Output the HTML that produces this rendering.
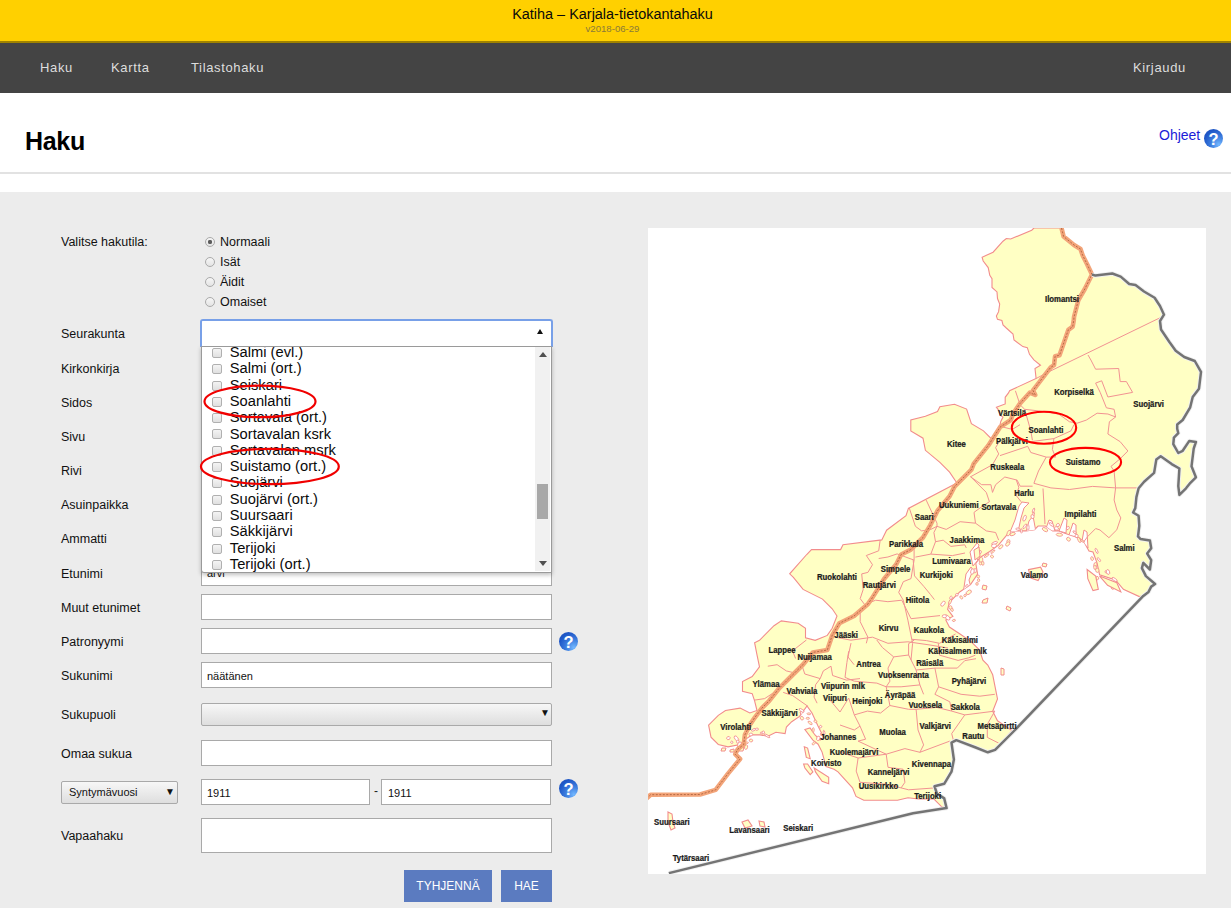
<!DOCTYPE html>
<html><head><meta charset="utf-8">
<style>
*{box-sizing:border-box}
html,body{margin:0;padding:0}
body{width:1231px;height:908px;overflow:hidden;position:relative;background:#ececec;font-family:"Liberation Sans",sans-serif;color:#222}
.a{position:absolute;white-space:nowrap}
#hdr{left:0;top:0;width:1231px;height:41px;background:#ffd000}
#hdrb{left:0;top:41px;width:1231px;height:2px;background:#a08300}
#nav{left:0;top:43px;width:1231px;height:50px;background:#444}
.nv{color:#dedede;font-size:13px;letter-spacing:0.65px;top:60px;line-height:16px}
#white{left:0;top:93px;width:1231px;height:99px;background:#fff}
#hline{left:0;top:172px;width:1231px;height:2px;background:#e2e2e2}
.lbl{font-size:12.5px;color:#111;line-height:16px;left:61px}
.inp{background:#fff;border:1px solid #a9a9a9;height:26px}
.it{font-size:14.7px;color:#0a0a0a;left:230px;line-height:16px}
.cb{left:212px;width:10px;height:10px;border:1px solid #b0b0b0;border-radius:2px;background:linear-gradient(#f4f4f4,#e0e0e0)}
.rd{left:205px;width:10px;height:10px;border:1px solid #aaa;border-radius:50%;background:linear-gradient(#f6f6f6,#e4e4e4)}
.btn{background:#5b7bc0;color:#fff;font-size:12px;text-align:center;line-height:32px;height:32px;top:870px}
.help{width:19px;height:19px;border-radius:50%;background:radial-gradient(circle at 78% 82%,#74b8ff 0%,#3f80e0 35%,#1f58c8 70%,#1a4fb8 100%);color:#fff;font-weight:bold;font-size:16.5px;line-height:20px;text-align:center}
</style></head><body>
<div id="hdr" class="a"></div>
<div id="hdrb" class="a"></div>
<div class="a" style="left:-3px;top:5.6px;width:1231px;text-align:center;font-size:14.45px;color:#0a0a0a;line-height:16px">Katiha – Karjala-tietokantahaku</div>
<div class="a" style="left:0;top:23px;width:1225px;text-align:center;font-size:9.6px;color:#8a7a3a;line-height:11px">v2018-06-29</div>
<div id="nav" class="a"></div>
<div class="a nv" style="left:40px">Haku</div>
<div class="a nv" style="left:111px">Kartta</div>
<div class="a nv" style="left:191px">Tilastohaku</div>
<div class="a nv" style="left:1133px">Kirjaudu</div>
<div id="white" class="a"></div>
<div id="hline" class="a"></div>
<div class="a" style="left:25px;top:127px;font-size:25px;letter-spacing:-0.3px;font-weight:bold;color:#000;line-height:28px">Haku</div>
<div class="a" style="left:1159px;top:127px;font-size:14px;color:#1c1cd8;line-height:16px">Ohjeet</div>
<div class="a help" style="left:1204px;top:129px">?</div>

<!-- form labels -->
<div class="a lbl" style="top:234.4px">Valitse hakutila:</div>
<div class="a rd" style="top:237px"></div><div class="a" style="left:208px;top:240px;width:4px;height:4px;border-radius:50%;background:#5a5a5a;box-shadow:0 0 0.6px #666"></div>
<div class="a rd" style="top:257px"></div>
<div class="a rd" style="top:277px"></div>
<div class="a rd" style="top:297px"></div>
<div class="a lbl" style="left:220px;top:234.4px">Normaali</div>
<div class="a lbl" style="left:220px;top:254.4px">Isät</div>
<div class="a lbl" style="left:220px;top:274.4px">Äidit</div>
<div class="a lbl" style="left:220px;top:294.4px">Omaiset</div>

<div class="a lbl" style="top:326px">Seurakunta</div>
<div class="a lbl" style="top:361px">Kirkonkirja</div>
<div class="a lbl" style="top:395px">Sidos</div>
<div class="a lbl" style="top:429px">Sivu</div>
<div class="a lbl" style="top:463px">Rivi</div>
<div class="a lbl" style="top:497px">Asuinpaikka</div>
<div class="a lbl" style="top:531px">Ammatti</div>
<div class="a lbl" style="top:566px">Etunimi</div>
<div class="a lbl" style="top:600px">Muut etunimet</div>
<div class="a lbl" style="top:634px">Patronyymi</div>
<div class="a lbl" style="top:668px">Sukunimi</div>
<div class="a lbl" style="top:707px">Sukupuoli</div>
<div class="a lbl" style="top:746px">Omaa sukua</div>
<div class="a lbl" style="top:828px">Vapaahaku</div>

<!-- inputs -->
<div class="a inp" style="left:201px;top:560px;width:351px"></div>
<div class="a" style="left:207px;top:565px;font-size:11px;color:#111;line-height:16px">ärvi</div>
<div class="a inp" style="left:201px;top:594px;width:351px"></div>
<div class="a inp" style="left:201px;top:628px;width:351px"></div>
<div class="a help" style="left:559px;top:632px">?</div>
<div class="a inp" style="left:201px;top:662px;width:351px"></div>
<div class="a" style="left:207px;top:668px;font-size:11px;color:#111;line-height:16px">näätänen</div>
<div class="a" style="left:201px;top:703px;width:351px;height:23px;border:1px solid #a9a9a9;border-radius:2px;background:linear-gradient(#f7f7f7,#dedede)"></div>
<div class="a" style="left:540px;top:706px;font-size:10px;color:#111;line-height:14px">▼</div>
<div class="a inp" style="left:201px;top:740px;width:351px"></div>
<div class="a" style="left:61px;top:781px;width:117px;height:23px;border:1px solid #a9a9a9;border-radius:2px;background:linear-gradient(#f7f7f7,#dedede)"></div>
<div class="a" style="left:69px;top:785px;font-size:11px;color:#111;line-height:14px">Syntymävuosi</div>
<div class="a" style="left:165px;top:785px;font-size:10px;color:#111;line-height:14px">▼</div>
<div class="a inp" style="left:201px;top:779px;width:169px"></div>
<div class="a" style="left:207px;top:785px;font-size:11px;color:#111;line-height:16px">1911</div>
<div class="a" style="left:374px;top:783px;font-size:12px;color:#222;line-height:16px">-</div>
<div class="a inp" style="left:381px;top:779px;width:170px"></div>
<div class="a" style="left:388px;top:785px;font-size:11px;color:#111;line-height:16px">1911</div>
<div class="a help" style="left:559px;top:779px">?</div>
<div class="a inp" style="left:201px;top:818px;width:351px;height:35px"></div>
<div class="a btn" style="left:404px;width:88px">TYHJENNÄ</div>
<div class="a btn" style="left:501px;width:51px">HAE</div>

<!-- seurakunta dropdown -->
<div id="dd" class="a" style="left:201px;top:346px;width:351px;height:227px;background:#fff;border:1px solid #9a9a9a;border-top:none;box-shadow:0 2px 4px rgba(0,0,0,.25);overflow:hidden;border-radius:0 0 0 3px">
<div class="a cb" style="left:10px;top:1.9px"></div><div class="a it" style="left:27.8px;top:-1.9px">Salmi (evl.)</div>
<div class="a cb" style="left:10px;top:18.2px"></div><div class="a it" style="left:27.8px;top:14.3px">Salmi (ort.)</div>
<div class="a cb" style="left:10px;top:34.5px"></div><div class="a it" style="left:27.8px;top:30.6px">Seiskari</div>
<div class="a cb" style="left:10px;top:50.8px"></div><div class="a it" style="left:27.8px;top:46.9px">Soanlahti</div>
<div class="a cb" style="left:10px;top:67.1px"></div><div class="a it" style="left:27.8px;top:63.2px">Sortavala (ort.)</div>
<div class="a cb" style="left:10px;top:83.4px"></div><div class="a it" style="left:27.8px;top:79.6px">Sortavalan ksrk</div>
<div class="a cb" style="left:10px;top:99.7px"></div><div class="a it" style="left:27.8px;top:95.8px">Sortavalan msrk</div>
<div class="a cb" style="left:10px;top:116.0px"></div><div class="a it" style="left:27.8px;top:112.1px">Suistamo (ort.)</div>
<div class="a cb" style="left:10px;top:132.3px"></div><div class="a it" style="left:27.8px;top:128.4px">Suojärvi</div>
<div class="a cb" style="left:10px;top:148.6px"></div><div class="a it" style="left:27.8px;top:144.8px">Suojärvi (ort.)</div>
<div class="a cb" style="left:10px;top:164.9px"></div><div class="a it" style="left:27.8px;top:161.1px">Suursaari</div>
<div class="a cb" style="left:10px;top:181.2px"></div><div class="a it" style="left:27.8px;top:177.4px">Säkkijärvi</div>
<div class="a cb" style="left:10px;top:197.5px"></div><div class="a it" style="left:27.8px;top:193.7px">Terijoki</div>
<div class="a cb" style="left:10px;top:213.8px"></div><div class="a it" style="left:27.8px;top:210.0px">Terijoki (ort.)</div>
</div>
<div class="a" style="left:535px;top:347px;width:15px;height:224px;background:#f1f1f1"></div>
<div class="a" style="left:537px;top:484px;width:11px;height:35px;background:#a8a8a8"></div>
<div class="a" style="left:539px;top:352px;width:0;height:0;border-left:4px solid transparent;border-right:4px solid transparent;border-bottom:5px solid #505050"></div>
<div class="a" style="left:539px;top:561px;width:0;height:0;border-left:4px solid transparent;border-right:4px solid transparent;border-top:5px solid #505050"></div>

<!-- select -->
<div class="a" style="left:200px;top:319px;width:353px;height:28px;background:#fff;border:2px solid #78a0e8;border-bottom:1px solid #9a9a9a;border-radius:3px 3px 0 0"></div>
<div class="a" style="left:537px;top:329px;width:0;height:0;border-left:3px solid transparent;border-right:3px solid transparent;border-bottom:5px solid #111"></div>
<svg class="a" style="left:190px;top:370px" width="170" height="130" viewBox="190 370 170 130"><g fill="none" stroke="#f00000" stroke-width="2.2"><ellipse cx="260" cy="401.4" rx="55.5" ry="15.8"/><ellipse cx="269.9" cy="466.5" rx="68.9" ry="17.7"/></g></svg>
<!-- map -->
<div class="a" style="left:648px;top:228px;width:558px;height:646px;background:#fff"></div>
<svg class="a" style="left:648px;top:228px" width="558" height="646" viewBox="648 228 558 646">
<polygon points="1034,228 1061.5,228 1063.6,236.5 1074,245 1080.5,249 1082.7,255.5 1087,264 1092,274.5 1095.4,275.6 1112.3,273.5 1120.7,276.6 1129.2,284 1135.5,285 1144,291.5 1154.6,297.8 1160,306 1164,314.7 1160,321 1161,329.5 1169.4,342 1175.7,350.7 1184.2,357 1194.8,361 1201,371.8 1199,388.7 1192.7,397 1190.2,407.3 1182.7,420 1177.2,424.4 1177.2,428.8 1178.3,433.2 1173.9,437.6 1173.3,444.2 1178.3,453 1182.7,450.8 1189.3,440.9 1195.9,442 1193.7,448.6 1191.5,466.3 1195.9,477.3 1190.4,482.8 1186,488.3 1179.4,494.9 1178.3,486.1 1179.4,468.5 1171.7,464.1 1160.7,456.3 1156.3,459.6 1154.1,472.9 1144.1,481.7 1138.6,488.3 1136.4,497.1 1135.3,508.1 1133.1,512.5 1138.6,515.8 1139.3,525.9 1138,536.4 1140.6,539.1 1149.9,540.4 1151.2,548.3 1147.2,553.6 1151.2,560.2 1149.9,569.5 1143.3,562.9 1141.9,568.1 1145.9,576.1 1155.1,584 1151.2,586.6 1148.5,591.9 1143.3,595.9 1139.3,596.6 1123.4,589.3 1115.5,580 1099.6,574.8 1097,562.9 1093,552 1089,551 1084,542 1079.3,538.1 1072.1,535.7 1064.8,533.3 1058.7,530.9 1052.7,530.9 1045.4,526 1038.1,526 1034.5,529.7 1026,530.9 1018.8,530.9 1010.3,530.9 1004.2,538.1 998.2,545.4 989.7,551.5 980,557.5 975.8,563.5 977.6,574.1 970.5,584.6 960,591.7 949.4,602.3 947.6,609.3 952.9,616.4 945.8,619.9 949.4,627 960,634 970.5,641.1 979.4,649.9 982.9,660.1 987.8,665.1 992.7,674.8 995.1,686.9 997.5,699 992.7,711.2 997.5,720.8 1012,730.5 995.1,749.9 987.8,752.3 975.7,747.5 956.3,740.2 951.5,742.7 953.9,759.6 951.5,771.7 944.2,783.8 934.5,786.3 936.9,793.5 944.2,798.4 946.6,808.1 941.7,806.8 934,799 918.3,799 908,797.7 897.5,800.3 863.8,800.3 856,796.4 852.5,787.8 838,771.9 834,769.3 826.1,766.6 822.1,752.1 818.1,744.2 812.9,740.2 804.9,729.6 810,728 815,735 820,740 824,738 818,726 812,713 807,706 799.6,716.4 791.7,721.7 786.4,727 785.1,733.6 775.9,732.3 767.9,736.3 760,734.9 752.2,734.8 745,739.6 740.1,744.5 728,746.9 718.3,744.5 711,737.2 708.6,725.1 718.3,715.4 725.5,710.5 740.1,708.1 749.8,713 757,710.5 754.6,700.8 752.2,693.6 742.5,691.2 742.5,681.5 752.2,676.6 759.5,666.9 757,654.8 754.6,642.7 759.5,640.3 774,625.7 781.3,620.9 798.2,623.3 805.5,628.2 805.5,637.8 815.2,640.3 827.3,635.4 832.2,628.2 837,616 832.2,608.8 822.5,599.1 803.1,589.4 793.4,577.3 789.7,573.8 806.7,554.5 811.5,549.6 840.6,549.6 843,544.7 881.8,539.9 886.6,530.2 906,515.7 908.4,508.4 956.9,483 949.6,472.1 939.9,462.4 925.4,450.3 923,438.2 910.8,430.9 910.8,420 925.4,416.3 937.5,411.5 939.9,406.7 954.5,404.2 966.6,409.1 971.4,423.6 983.5,430.9 990.8,438.2 998.1,433.3 1000.8,421.5 1003,417.1 999.7,414.9 999.7,411.6 996.4,407.2 1005.2,403.9 1005.2,397.3 1008.5,392.9 1009.6,390.7 1036.1,378.5 1035,368.6 1040.5,365.3 1033.9,359.8 1029.5,354.3 1027.3,347.7 1022.9,346.6 1014,340 1013,334 1006.3,328 1003,324.9 1001.9,320.5 997.5,319.4 996.4,316.1 998.6,311.7 999.7,304 997.5,298.5 997,291.9 992,287.5 992,278.7 989.8,275.4 988.2,267.6 983.2,261 982.1,257.2 993.1,252.2 1003,241.2 1006.3,238.5 1010.7,239 1031.7,230.2" fill="#ffffc4" stroke="#f28c8c" stroke-width="1.1"/>
<defs><clipPath id="land"><polygon points="1034,228 1061.5,228 1063.6,236.5 1074,245 1080.5,249 1082.7,255.5 1087,264 1092,274.5 1095.4,275.6 1112.3,273.5 1120.7,276.6 1129.2,284 1135.5,285 1144,291.5 1154.6,297.8 1160,306 1164,314.7 1160,321 1161,329.5 1169.4,342 1175.7,350.7 1184.2,357 1194.8,361 1201,371.8 1199,388.7 1192.7,397 1190.2,407.3 1182.7,420 1177.2,424.4 1177.2,428.8 1178.3,433.2 1173.9,437.6 1173.3,444.2 1178.3,453 1182.7,450.8 1189.3,440.9 1195.9,442 1193.7,448.6 1191.5,466.3 1195.9,477.3 1190.4,482.8 1186,488.3 1179.4,494.9 1178.3,486.1 1179.4,468.5 1171.7,464.1 1160.7,456.3 1156.3,459.6 1154.1,472.9 1144.1,481.7 1138.6,488.3 1136.4,497.1 1135.3,508.1 1133.1,512.5 1138.6,515.8 1139.3,525.9 1138,536.4 1140.6,539.1 1149.9,540.4 1151.2,548.3 1147.2,553.6 1151.2,560.2 1149.9,569.5 1143.3,562.9 1141.9,568.1 1145.9,576.1 1155.1,584 1151.2,586.6 1148.5,591.9 1143.3,595.9 1139.3,596.6 1123.4,589.3 1115.5,580 1099.6,574.8 1097,562.9 1093,552 1089,551 1084,542 1079.3,538.1 1072.1,535.7 1064.8,533.3 1058.7,530.9 1052.7,530.9 1045.4,526 1038.1,526 1034.5,529.7 1026,530.9 1018.8,530.9 1010.3,530.9 1004.2,538.1 998.2,545.4 989.7,551.5 980,557.5 975.8,563.5 977.6,574.1 970.5,584.6 960,591.7 949.4,602.3 947.6,609.3 952.9,616.4 945.8,619.9 949.4,627 960,634 970.5,641.1 979.4,649.9 982.9,660.1 987.8,665.1 992.7,674.8 995.1,686.9 997.5,699 992.7,711.2 997.5,720.8 1012,730.5 995.1,749.9 987.8,752.3 975.7,747.5 956.3,740.2 951.5,742.7 953.9,759.6 951.5,771.7 944.2,783.8 934.5,786.3 936.9,793.5 944.2,798.4 946.6,808.1 941.7,806.8 934,799 918.3,799 908,797.7 897.5,800.3 863.8,800.3 856,796.4 852.5,787.8 838,771.9 834,769.3 826.1,766.6 822.1,752.1 818.1,744.2 812.9,740.2 804.9,729.6 810,728 815,735 820,740 824,738 818,726 812,713 807,706 799.6,716.4 791.7,721.7 786.4,727 785.1,733.6 775.9,732.3 767.9,736.3 760,734.9 752.2,734.8 745,739.6 740.1,744.5 728,746.9 718.3,744.5 711,737.2 708.6,725.1 718.3,715.4 725.5,710.5 740.1,708.1 749.8,713 757,710.5 754.6,700.8 752.2,693.6 742.5,691.2 742.5,681.5 752.2,676.6 759.5,666.9 757,654.8 754.6,642.7 759.5,640.3 774,625.7 781.3,620.9 798.2,623.3 805.5,628.2 805.5,637.8 815.2,640.3 827.3,635.4 832.2,628.2 837,616 832.2,608.8 822.5,599.1 803.1,589.4 793.4,577.3 789.7,573.8 806.7,554.5 811.5,549.6 840.6,549.6 843,544.7 881.8,539.9 886.6,530.2 906,515.7 908.4,508.4 956.9,483 949.6,472.1 939.9,462.4 925.4,450.3 923,438.2 910.8,430.9 910.8,420 925.4,416.3 937.5,411.5 939.9,406.7 954.5,404.2 966.6,409.1 971.4,423.6 983.5,430.9 990.8,438.2 998.1,433.3 1000.8,421.5 1003,417.1 999.7,414.9 999.7,411.6 996.4,407.2 1005.2,403.9 1005.2,397.3 1008.5,392.9 1009.6,390.7 1036.1,378.5 1035,368.6 1040.5,365.3 1033.9,359.8 1029.5,354.3 1027.3,347.7 1022.9,346.6 1014,340 1013,334 1006.3,328 1003,324.9 1001.9,320.5 997.5,319.4 996.4,316.1 998.6,311.7 999.7,304 997.5,298.5 997,291.9 992,287.5 992,278.7 989.8,275.4 988.2,267.6 983.2,261 982.1,257.2 993.1,252.2 1003,241.2 1006.3,238.5 1010.7,239 1031.7,230.2"/></clipPath></defs>
<g clip-path="url(#land)">
<polygon points="1010,532 1015,520 1019,506 1022,502 1029,503 1024,508 1021,518 1018,532" fill="#ffffff" stroke="#f28c8c" stroke-width="1"/>
<polygon points="1026,532 1029,521 1033,516 1036,532" fill="#ffffff" stroke="#f28c8c" stroke-width="1"/>
<polygon points="1045,531 1049,520 1052,521 1055,531" fill="#ffffff" stroke="#f28c8c" stroke-width="1"/>
<polygon points="1059,531 1064,518 1067,520 1066,533" fill="#ffffff" stroke="#f28c8c" stroke-width="1"/>
<polygon points="1069,535 1073,523 1076,525 1076,537" fill="#ffffff" stroke="#f28c8c" stroke-width="1"/>
<polygon points="1082,541 1084,530 1087,532 1088,548" fill="#ffffff" stroke="#f28c8c" stroke-width="1"/>
<polygon points="970,552 977,543 979,545 975,556 978,560 973,566" fill="#ffffff" stroke="#f28c8c" stroke-width="1"/>
<polygon points="966,574 971,567 973,570 969,580 971,588 963,594" fill="#ffffff" stroke="#f28c8c" stroke-width="1"/>
<polygon points="952,605 958,598 962,604 955,612" fill="#ffffff" stroke="#f28c8c" stroke-width="1"/>
<polygon points="957,620 962,614 966,618 960,628" fill="#ffffff" stroke="#f28c8c" stroke-width="1"/>
<polygon points="800,712 808,708 811,716 804,722" fill="#ffffff" stroke="#f28c8c" stroke-width="1"/>
</g>
<ellipse cx="1033.5" cy="510.5" rx="2.5" ry="0.9" transform="rotate(110 1033.5 510.5)" fill="#ffffff" stroke="#f28c8c" stroke-width="0.8"/>
<ellipse cx="1033.6" cy="514.3" rx="2.2" ry="0.8" transform="rotate(101 1033.6 514.3)" fill="#ffffff" stroke="#f28c8c" stroke-width="0.8"/>
<ellipse cx="1032.5" cy="516.6" rx="2.0" ry="1.6" transform="rotate(77 1032.5 516.6)" fill="#ffffff" stroke="#f28c8c" stroke-width="0.8"/>
<ellipse cx="1024.6" cy="518.2" rx="3.1" ry="1.4" transform="rotate(111 1024.6 518.2)" fill="#ffffff" stroke="#f28c8c" stroke-width="0.8"/>
<ellipse cx="1028.0" cy="527.5" rx="2.9" ry="1.1" transform="rotate(91 1028.0 527.5)" fill="#ffffff" stroke="#f28c8c" stroke-width="0.8"/>
<ellipse cx="1024.8" cy="526.3" rx="2.8" ry="1.0" transform="rotate(126 1024.8 526.3)" fill="#ffffff" stroke="#f28c8c" stroke-width="0.8"/>
<ellipse cx="1021.3" cy="530.8" rx="2.3" ry="0.9" transform="rotate(84 1021.3 530.8)" fill="#ffffff" stroke="#f28c8c" stroke-width="0.8"/>
<ellipse cx="1017.9" cy="529.1" rx="2.1" ry="1.1" transform="rotate(187 1017.9 529.1)" fill="#ffffff" stroke="#f28c8c" stroke-width="0.8"/>
<ellipse cx="1012.6" cy="534.0" rx="2.8" ry="1.5" transform="rotate(160 1012.6 534.0)" fill="#ffffc4" stroke="#f28c8c" stroke-width="0.8"/>
<ellipse cx="1008.7" cy="533.1" rx="3.0" ry="1.5" transform="rotate(113 1008.7 533.1)" fill="#ffffc4" stroke="#f28c8c" stroke-width="0.8"/>
<ellipse cx="1008.4" cy="541.6" rx="2.0" ry="1.6" transform="rotate(102 1008.4 541.6)" fill="#ffffc4" stroke="#f28c8c" stroke-width="0.8"/>
<ellipse cx="1007.7" cy="544.0" rx="2.5" ry="1.6" transform="rotate(135 1007.7 544.0)" fill="#ffffc4" stroke="#f28c8c" stroke-width="0.8"/>
<ellipse cx="1000.8" cy="546.8" rx="2.6" ry="1.4" transform="rotate(136 1000.8 546.8)" fill="#ffffc4" stroke="#f28c8c" stroke-width="0.8"/>
<ellipse cx="994.6" cy="543.1" rx="3.1" ry="1.3" transform="rotate(157 994.6 543.1)" fill="#ffffff" stroke="#f28c8c" stroke-width="0.8"/>
<ellipse cx="994.0" cy="545.8" rx="2.5" ry="1.8" transform="rotate(170 994.0 545.8)" fill="#ffffff" stroke="#f28c8c" stroke-width="0.8"/>
<ellipse cx="992.9" cy="551.7" rx="2.5" ry="0.8" transform="rotate(141 992.9 551.7)" fill="#ffffc4" stroke="#f28c8c" stroke-width="0.8"/>
<ellipse cx="992.0" cy="556.5" rx="1.3" ry="1.6" transform="rotate(119 992.0 556.5)" fill="#ffffc4" stroke="#f28c8c" stroke-width="0.8"/>
<ellipse cx="986.7" cy="555.6" rx="2.9" ry="0.9" transform="rotate(144 986.7 555.6)" fill="#ffffc4" stroke="#f28c8c" stroke-width="0.8"/>
<ellipse cx="979.1" cy="552.8" rx="2.8" ry="1.7" transform="rotate(131 979.1 552.8)" fill="#ffffff" stroke="#f28c8c" stroke-width="0.8"/>
<ellipse cx="981.0" cy="560.1" rx="3.0" ry="1.8" transform="rotate(97 981.0 560.1)" fill="#ffffc4" stroke="#f28c8c" stroke-width="0.8"/>
<ellipse cx="980.8" cy="563.3" rx="1.7" ry="1.3" transform="rotate(132 980.8 563.3)" fill="#ffffc4" stroke="#f28c8c" stroke-width="0.8"/>
<ellipse cx="982.8" cy="563.3" rx="2.0" ry="1.2" transform="rotate(86 982.8 563.3)" fill="#ffffc4" stroke="#f28c8c" stroke-width="0.8"/>
<ellipse cx="975.0" cy="570.7" rx="2.2" ry="1.4" transform="rotate(94 975.0 570.7)" fill="#ffffff" stroke="#f28c8c" stroke-width="0.8"/>
<ellipse cx="972.4" cy="571.5" rx="2.8" ry="1.7" transform="rotate(104 972.4 571.5)" fill="#ffffff" stroke="#f28c8c" stroke-width="0.8"/>
<ellipse cx="978.2" cy="576.5" rx="1.4" ry="1.4" transform="rotate(89 978.2 576.5)" fill="#ffffc4" stroke="#f28c8c" stroke-width="0.8"/>
<ellipse cx="978.6" cy="580.2" rx="1.5" ry="1.1" transform="rotate(88 978.6 580.2)" fill="#ffffc4" stroke="#f28c8c" stroke-width="0.8"/>
<ellipse cx="977.0" cy="583.9" rx="1.4" ry="1.2" transform="rotate(86 977.0 583.9)" fill="#ffffc4" stroke="#f28c8c" stroke-width="0.8"/>
<ellipse cx="966.9" cy="585.9" rx="1.5" ry="1.1" transform="rotate(134 966.9 585.9)" fill="#ffffff" stroke="#f28c8c" stroke-width="0.8"/>
<ellipse cx="968.8" cy="592.3" rx="2.9" ry="1.8" transform="rotate(143 968.8 592.3)" fill="#ffffc4" stroke="#f28c8c" stroke-width="0.8"/>
<ellipse cx="965.1" cy="595.4" rx="1.4" ry="1.1" transform="rotate(127 965.1 595.4)" fill="#ffffc4" stroke="#f28c8c" stroke-width="0.8"/>
<ellipse cx="961.3" cy="597.4" rx="1.2" ry="1.8" transform="rotate(137 961.3 597.4)" fill="#ffffc4" stroke="#f28c8c" stroke-width="0.8"/>
<ellipse cx="956.9" cy="594.7" rx="1.3" ry="1.3" transform="rotate(173 956.9 594.7)" fill="#ffffff" stroke="#f28c8c" stroke-width="0.8"/>
<ellipse cx="951.0" cy="597.8" rx="1.7" ry="1.2" transform="rotate(108 951.0 597.8)" fill="#ffffff" stroke="#f28c8c" stroke-width="0.8"/>
<ellipse cx="950.1" cy="601.7" rx="2.8" ry="1.1" transform="rotate(113 950.1 601.7)" fill="#ffffc4" stroke="#f28c8c" stroke-width="0.8"/>
<ellipse cx="943.0" cy="603.7" rx="2.9" ry="1.6" transform="rotate(130 943.0 603.7)" fill="#ffffff" stroke="#f28c8c" stroke-width="0.8"/>
<ellipse cx="951.8" cy="609.4" rx="2.2" ry="1.2" transform="rotate(67 951.8 609.4)" fill="#ffffc4" stroke="#f28c8c" stroke-width="0.8"/>
<ellipse cx="950.4" cy="607.4" rx="1.7" ry="1.5" transform="rotate(90 950.4 607.4)" fill="#ffffc4" stroke="#f28c8c" stroke-width="0.8"/>
<ellipse cx="947.3" cy="617.5" rx="3.2" ry="1.8" transform="rotate(42 947.3 617.5)" fill="#ffffff" stroke="#f28c8c" stroke-width="0.8"/>
<ellipse cx="953.9" cy="620.4" rx="1.6" ry="1.0" transform="rotate(164 953.9 620.4)" fill="#ffffc4" stroke="#f28c8c" stroke-width="0.8"/>
<ellipse cx="944.4" cy="616.2" rx="2.2" ry="1.5" transform="rotate(178 944.4 616.2)" fill="#ffffff" stroke="#f28c8c" stroke-width="0.8"/>
<ellipse cx="1045.0" cy="529.6" rx="3.0" ry="1.6" transform="rotate(31 1045.0 529.6)" fill="#ffffc4" stroke="#f28c8c" stroke-width="0.8"/>
<ellipse cx="1051.5" cy="524.5" rx="2.8" ry="1.1" transform="rotate(35 1051.5 524.5)" fill="#ffffff" stroke="#f28c8c" stroke-width="0.8"/>
<ellipse cx="1056.5" cy="528.4" rx="2.0" ry="1.7" transform="rotate(29 1056.5 528.4)" fill="#ffffff" stroke="#f28c8c" stroke-width="0.8"/>
<ellipse cx="1057.9" cy="525.1" rx="1.5" ry="1.7" transform="rotate(36 1057.9 525.1)" fill="#ffffff" stroke="#f28c8c" stroke-width="0.8"/>
<ellipse cx="1059.4" cy="534.7" rx="3.2" ry="1.5" transform="rotate(6 1059.4 534.7)" fill="#ffffc4" stroke="#f28c8c" stroke-width="0.8"/>
<ellipse cx="1067.9" cy="528.0" rx="1.2" ry="1.8" transform="rotate(30 1067.9 528.0)" fill="#ffffff" stroke="#f28c8c" stroke-width="0.8"/>
<ellipse cx="1068.5" cy="539.2" rx="2.1" ry="1.7" transform="rotate(45 1068.5 539.2)" fill="#ffffc4" stroke="#f28c8c" stroke-width="0.8"/>
<ellipse cx="1074.5" cy="532.2" rx="1.8" ry="1.0" transform="rotate(37 1074.5 532.2)" fill="#ffffff" stroke="#f28c8c" stroke-width="0.8"/>
<ellipse cx="1076.6" cy="535.9" rx="1.5" ry="1.7" transform="rotate(19 1076.6 535.9)" fill="#ffffff" stroke="#f28c8c" stroke-width="0.8"/>
<ellipse cx="1079.1" cy="539.8" rx="3.0" ry="1.2" transform="rotate(64 1079.1 539.8)" fill="#ffffc4" stroke="#f28c8c" stroke-width="0.8"/>
<ellipse cx="1082.5" cy="541.1" rx="2.2" ry="0.8" transform="rotate(25 1082.5 541.1)" fill="#ffffc4" stroke="#f28c8c" stroke-width="0.8"/>
<ellipse cx="1096.6" cy="550.9" rx="2.8" ry="1.0" transform="rotate(65 1096.6 550.9)" fill="#ffffff" stroke="#f28c8c" stroke-width="0.8"/>
<ellipse cx="1092.1" cy="558.6" rx="1.9" ry="1.3" transform="rotate(72 1092.1 558.6)" fill="#ffffc4" stroke="#f28c8c" stroke-width="0.8"/>
<ellipse cx="1098.9" cy="559.6" rx="2.3" ry="1.0" transform="rotate(49 1098.9 559.6)" fill="#ffffff" stroke="#f28c8c" stroke-width="0.8"/>
<ellipse cx="1095.4" cy="564.8" rx="2.3" ry="1.6" transform="rotate(100 1095.4 564.8)" fill="#ffffc4" stroke="#f28c8c" stroke-width="0.8"/>
<ellipse cx="1095.0" cy="567.4" rx="2.2" ry="1.3" transform="rotate(83 1095.0 567.4)" fill="#ffffc4" stroke="#f28c8c" stroke-width="0.8"/>
<ellipse cx="1097.3" cy="570.2" rx="2.2" ry="1.7" transform="rotate(83 1097.3 570.2)" fill="#ffffc4" stroke="#f28c8c" stroke-width="0.8"/>
<ellipse cx="1097.3" cy="578.1" rx="1.7" ry="1.4" transform="rotate(73 1097.3 578.1)" fill="#ffffc4" stroke="#f28c8c" stroke-width="0.8"/>
<ellipse cx="1106.4" cy="571.8" rx="1.4" ry="1.2" transform="rotate(3 1106.4 571.8)" fill="#ffffff" stroke="#f28c8c" stroke-width="0.8"/>
<ellipse cx="1108.0" cy="572.0" rx="2.5" ry="1.6" transform="rotate(69 1108.0 572.0)" fill="#ffffff" stroke="#f28c8c" stroke-width="0.8"/>
<ellipse cx="1105.5" cy="580.7" rx="2.5" ry="0.9" transform="rotate(68 1105.5 580.7)" fill="#ffffc4" stroke="#f28c8c" stroke-width="0.8"/>
<ellipse cx="1114.6" cy="579.5" rx="3.1" ry="1.2" transform="rotate(36 1114.6 579.5)" fill="#ffffff" stroke="#f28c8c" stroke-width="0.8"/>
<ellipse cx="1112.6" cy="588.0" rx="1.5" ry="1.2" transform="rotate(39 1112.6 588.0)" fill="#ffffc4" stroke="#f28c8c" stroke-width="0.8"/>
<ellipse cx="728.4" cy="738.1" rx="1.8" ry="1.5" transform="rotate(-22 728.4 738.1)" fill="#ffffff" stroke="#f28c8c" stroke-width="0.8"/>
<ellipse cx="731.8" cy="742.3" rx="1.2" ry="1.1" transform="rotate(26 731.8 742.3)" fill="#ffffff" stroke="#f28c8c" stroke-width="0.8"/>
<ellipse cx="736.5" cy="738.6" rx="3.2" ry="1.6" transform="rotate(54 736.5 738.6)" fill="#ffffff" stroke="#f28c8c" stroke-width="0.8"/>
<ellipse cx="737.8" cy="741.7" rx="1.3" ry="1.6" transform="rotate(-2 737.8 741.7)" fill="#ffffff" stroke="#f28c8c" stroke-width="0.8"/>
<ellipse cx="739.3" cy="744.6" rx="3.0" ry="1.6" transform="rotate(-62 739.3 744.6)" fill="#ffffff" stroke="#f28c8c" stroke-width="0.8"/>
<ellipse cx="746.1" cy="747.1" rx="2.3" ry="1.5" transform="rotate(-75 746.1 747.1)" fill="#ffffc4" stroke="#f28c8c" stroke-width="0.8"/>
<ellipse cx="746.3" cy="742.9" rx="2.1" ry="0.9" transform="rotate(-7 746.3 742.9)" fill="#ffffc4" stroke="#f28c8c" stroke-width="0.8"/>
<ellipse cx="751.0" cy="740.5" rx="1.4" ry="1.7" transform="rotate(-77 751.0 740.5)" fill="#ffffc4" stroke="#f28c8c" stroke-width="0.8"/>
<ellipse cx="750.9" cy="734.5" rx="1.9" ry="1.4" transform="rotate(-8 750.9 734.5)" fill="#ffffff" stroke="#f28c8c" stroke-width="0.8"/>
<ellipse cx="753.6" cy="729.8" rx="2.3" ry="1.0" transform="rotate(-25 753.6 729.8)" fill="#ffffff" stroke="#f28c8c" stroke-width="0.8"/>
<ellipse cx="756.9" cy="729.2" rx="1.6" ry="1.1" transform="rotate(-9 756.9 729.2)" fill="#ffffff" stroke="#f28c8c" stroke-width="0.8"/>
<ellipse cx="762.3" cy="732.9" rx="2.2" ry="1.0" transform="rotate(-6 762.3 732.9)" fill="#ffffff" stroke="#f28c8c" stroke-width="0.8"/>
<ellipse cx="763.3" cy="732.5" rx="1.2" ry="1.5" transform="rotate(10 763.3 732.5)" fill="#ffffff" stroke="#f28c8c" stroke-width="0.8"/>
<ellipse cx="767.2" cy="735.9" rx="3.1" ry="0.9" transform="rotate(32 767.2 735.9)" fill="#ffffff" stroke="#f28c8c" stroke-width="0.8"/>
<ellipse cx="801.6" cy="710.4" rx="2.9" ry="1.2" transform="rotate(34 801.6 710.4)" fill="#ffffff" stroke="#f28c8c" stroke-width="0.8"/>
<ellipse cx="801.9" cy="718.2" rx="1.9" ry="1.6" transform="rotate(50 801.9 718.2)" fill="#ffffc4" stroke="#f28c8c" stroke-width="0.8"/>
<ellipse cx="808.9" cy="713.8" rx="1.9" ry="0.9" transform="rotate(4 808.9 713.8)" fill="#ffffc4" stroke="#f28c8c" stroke-width="0.8"/>
<ellipse cx="807.8" cy="718.3" rx="1.7" ry="1.0" transform="rotate(0 807.8 718.3)" fill="#ffffc4" stroke="#f28c8c" stroke-width="0.8"/>
<ellipse cx="810.1" cy="722.9" rx="2.5" ry="1.1" transform="rotate(36 810.1 722.9)" fill="#ffffc4" stroke="#f28c8c" stroke-width="0.8"/>
<ellipse cx="815.4" cy="721.3" rx="1.5" ry="1.2" transform="rotate(37 815.4 721.3)" fill="#ffffc4" stroke="#f28c8c" stroke-width="0.8"/>
<ellipse cx="813.2" cy="730.0" rx="2.3" ry="1.0" transform="rotate(94 813.2 730.0)" fill="#ffffc4" stroke="#f28c8c" stroke-width="0.8"/>
<ellipse cx="820.6" cy="726.6" rx="1.2" ry="1.2" transform="rotate(54 820.6 726.6)" fill="#ffffff" stroke="#f28c8c" stroke-width="0.8"/>
<ellipse cx="824.1" cy="732.5" rx="2.2" ry="0.8" transform="rotate(79 824.1 732.5)" fill="#ffffff" stroke="#f28c8c" stroke-width="0.8"/>
<ellipse cx="821.2" cy="734.3" rx="1.3" ry="0.8" transform="rotate(82 821.2 734.3)" fill="#ffffc4" stroke="#f28c8c" stroke-width="0.8"/>
<ellipse cx="818.3" cy="738.3" rx="2.3" ry="1.6" transform="rotate(110 818.3 738.3)" fill="#ffffff" stroke="#f28c8c" stroke-width="0.8"/>
<ellipse cx="813.8" cy="743.3" rx="2.0" ry="1.1" transform="rotate(136 813.8 743.3)" fill="#ffffc4" stroke="#f28c8c" stroke-width="0.8"/>
<polygon points="974,550 979,547 980,556 975,560" fill="#ffffc4" stroke="#f28c8c" stroke-width="1"/>
<polygon points="983,585 987,586 986,590 982,589" fill="#ffffc4" stroke="#f28c8c" stroke-width="1"/>
<polygon points="983,600 988,598 987,603 982,603" fill="#ffffc4" stroke="#f28c8c" stroke-width="1"/>
<polygon points="1007,606 1011,608 1010,611 1006,609" fill="#ffffc4" stroke="#f28c8c" stroke-width="1"/>
<polygon points="1043,563 1047,564 1046,567 1042,566" fill="#ffffc4" stroke="#f28c8c" stroke-width="1"/>
<polygon points="1001,668 1004,669 1004,675 1001,675" fill="#ffffc4" stroke="#f28c8c" stroke-width="1"/>
<polygon points="722,748 726,748 725,751 721,751" fill="#ffffc4" stroke="#f28c8c" stroke-width="1"/>
<polygon points="730,750 734,749 734,752 730,752" fill="#ffffc4" stroke="#f28c8c" stroke-width="1"/>
<polygon points="740,748 744,747 743,751 739,751" fill="#ffffc4" stroke="#f28c8c" stroke-width="1"/>
<polygon points="1028.5,569.6 1040.6,567.2 1043,572.1 1038.1,580.5 1030.9,578.1" fill="#ffffc4" stroke="#f28c8c" stroke-width="1.1"/>
<polygon points="1087.1,569.5 1095.7,576.1 1098.3,589.3 1093,590.6 1087.8,578.7" fill="#ffffc4" stroke="#f28c8c" stroke-width="1.1"/>
<polygon points="1099.6,576.1 1116.8,582.7 1120.8,591.9 1107.6,585.3" fill="#ffffc4" stroke="#f28c8c" stroke-width="1.1"/>
<polygon points="803.6,764 807.6,764 812.9,771.9 810.2,774.6 804.9,768" fill="#ffffc4" stroke="#f28c8c" stroke-width="1.1"/>
<polygon points="814.2,768 828.7,777.2 828.7,783.8 822.1,781.2 815.5,771.9" fill="#ffffc4" stroke="#f28c8c" stroke-width="1.1"/>
<polygon points="804.3,746.8 807.6,748.1 810.2,758.7 806.3,757.4" fill="#ffffc4" stroke="#f28c8c" stroke-width="1.1"/>
<polygon points="668,812 672,814 673,822 675,828 671,830 668,822" fill="#ffffc4" stroke="#f28c8c" stroke-width="1.1"/>
<polygon points="742,822 748,820 752,826 745,828" fill="#ffffc4" stroke="#f28c8c" stroke-width="1.1"/>
<polygon points="759,821 764,822 765,827 760,826" fill="#ffffc4" stroke="#f28c8c" stroke-width="1.1"/>
<polyline points="1162,316.8 1048.8,371.8 1036.1,378.5" fill="none" stroke="#f29292" stroke-width="1"/>
<polyline points="1088,355 1090.9,360 1095.6,369.2 1118.7,368.5 1120.2,381.6 1126.4,381.6 1132.6,392.4 1107.9,397 1101.7,380.8 1095.6,383.1 1100.2,392.4 1106.4,407.8 1114.1,409.3 1115.6,417 1109.4,421.7 1107.9,434 1120.2,441.7 1127.9,451 1120.2,458.7 1111,466.4 1114.1,471 1115.6,487.9 1114.1,500 1116.8,510 1120.8,517.9 1116.8,529.8 1108.9,537.7 1100,530 1095.7,528.5 1087.8,536.4 1083.8,541.7" fill="none" stroke="#f29292" stroke-width="1"/>
<polyline points="1024.7,409.3 1038.5,410.9 1058.6,414 1069.4,421.7 1077.1,423.2 1086.3,420.1 1097.1,413.2 1107.9,414 1115.6,417" fill="none" stroke="#f29292" stroke-width="1"/>
<polyline points="1015.4,390.8 1020,404.7 1024.7,409.3 1030.8,430.9 1032.4,440.2" fill="none" stroke="#f29292" stroke-width="1"/>
<polyline points="1000,426.3 1012.3,429.4 1020,424.7" fill="none" stroke="#f29292" stroke-width="1"/>
<polyline points="1030.8,441.7 1053.9,438.6 1070.9,430.9 1074,424.7" fill="none" stroke="#f29292" stroke-width="1"/>
<polyline points="1053.9,438.6 1052.4,449.4 1055.5,457.1" fill="none" stroke="#f29292" stroke-width="1"/>
<polyline points="1000,455.6 1027.7,446.3 1030.8,452.5 1046.2,457.1 1055.5,457.1" fill="none" stroke="#f29292" stroke-width="1"/>
<polyline points="1046.2,457.1 1038.5,471 1033.9,483.3" fill="none" stroke="#f29292" stroke-width="1"/>
<polyline points="1043,488.5 1044.2,509 1045,524" fill="none" stroke="#f29292" stroke-width="1"/>
<polyline points="1016.3,480 1018.8,487.3 1016.3,495.7 1021.2,501.8" fill="none" stroke="#f29292" stroke-width="1"/>
<polyline points="1033.9,483.3 1050.9,487.9 1069.4,489.5 1092.5,486.4 1115.6,487.9 1138.7,487.9" fill="none" stroke="#f29292" stroke-width="1"/>
<polyline points="970.1,477 992.5,464.7 998.7,453.9 995.6,447.7 1000.2,440" fill="none" stroke="#f29292" stroke-width="1"/>
<polyline points="970.9,477 981.7,484.7 990.9,484.7 992.5,492.4 995.6,484.7 1004.8,477 1017.1,480.1 1020.2,486.2 1032.6,486.2" fill="none" stroke="#f29292" stroke-width="1"/>
<polyline points="970.9,477 986.3,492.4 989.4,501.7 980.2,507.8 974,512.4 975.5,523.2 986.3,530.9 995.6,532.5 998.7,540.2" fill="none" stroke="#f29292" stroke-width="1"/>
<polyline points="937,526.3 946.2,529.4 960.1,521.7 975.5,523.2" fill="none" stroke="#f29292" stroke-width="1"/>
<polyline points="926.2,500.1 937,523.2 937,526.3 933.9,532.5 935.5,541.7 930.8,554.1" fill="none" stroke="#f29292" stroke-width="1"/>
<polyline points="909.2,507.8 915.4,526.3 921.6,530.9 930.8,529.4 937,526.3" fill="none" stroke="#f29292" stroke-width="1"/>
<polyline points="935.5,541.7 943.2,540.2 950.9,546.4 964.7,544.8 966.3,547.9" fill="none" stroke="#f29292" stroke-width="1"/>
<polyline points="915.4,557.1 930.8,554.1 952.4,555.6 965,553" fill="none" stroke="#f29292" stroke-width="1"/>
<polyline points="880.2,540 878.7,550.8 866.3,555.5 872.5,564.7 867.9,572.4 861.7,573.9 863.2,589.4 860.2,598.6 864.8,604.8" fill="none" stroke="#f29292" stroke-width="1"/>
<polyline points="878.7,558.5 887.9,557 897.1,553.9 914.1,560.1" fill="none" stroke="#f29292" stroke-width="1"/>
<polyline points="914.1,545 914.1,560.1 911,578.6 903.3,581.7 898.7,592.4 903.3,600.2" fill="none" stroke="#f29292" stroke-width="1"/>
<polyline points="864.8,604.8 875.6,600.2 887.9,601.7 901.8,600.2 911,618.7 940,615.6" fill="none" stroke="#f29292" stroke-width="1"/>
<polyline points="860.2,612.5 860.2,621.7 867.9,637.2 866.3,643.3" fill="none" stroke="#f29292" stroke-width="1"/>
<polyline points="903.3,600.2 907.9,620.2 912.6,643.3 911,660" fill="none" stroke="#f29292" stroke-width="1"/>
<polyline points="835.5,637.2 850.9,640.2 872.5,637.2 887.9,643.3 907.9,641.8 930,645 948,648" fill="none" stroke="#f29292" stroke-width="1"/>
<polyline points="913.2,560 914.5,575.9 923.8,586.4 930.4,594.4 934.4,599.6" fill="none" stroke="#f29292" stroke-width="1"/>
<polyline points="806.4,640 792.5,650.8 795.6,658.5" fill="none" stroke="#f29292" stroke-width="1"/>
<polyline points="767.8,666.2 777.1,664.7 786.3,670.9 792.5,672.4" fill="none" stroke="#f29292" stroke-width="1"/>
<polyline points="801.7,664.7 804.8,674 820.2,678.6 823.3,670.9 831,666.2" fill="none" stroke="#f29292" stroke-width="1"/>
<polyline points="754,700.2 764.7,698.6 774,692.4 780.2,687.8" fill="none" stroke="#f29292" stroke-width="1"/>
<polyline points="783.2,692.4 792.5,695.5 807.9,706.3" fill="none" stroke="#f29292" stroke-width="1"/>
<polyline points="820.2,678.6 815.6,684.7 814.1,697.1 817.1,703.2" fill="none" stroke="#f29292" stroke-width="1"/>
<polyline points="831,666.2 832.6,675.5 846.4,680.1 860,678.6" fill="none" stroke="#f29292" stroke-width="1"/>
<polyline points="851,643.1 848,657 854.1,664.7" fill="none" stroke="#f29292" stroke-width="1"/>
<polyline points="848.7,651.2 846.9,662.5 845,677.4 854.3,681.2 876.8,683.1 886.2,686.8 901.1,686.8 919.9,684.9" fill="none" stroke="#f29292" stroke-width="1"/>
<polyline points="893.7,656.9 888,668.1 889.9,681.2 886.2,686.8" fill="none" stroke="#f29292" stroke-width="1"/>
<polyline points="876.8,640 882.4,647.5 893.7,656.9 908.6,655 916.1,670 919.9,684.9 923.6,694.3" fill="none" stroke="#f29292" stroke-width="1"/>
<polyline points="908.6,655 908.6,643.7 914.3,640" fill="none" stroke="#f29292" stroke-width="1"/>
<polyline points="916.1,670 934.9,668.1 957.3,668.1 964.8,660.6 976,658.7" fill="none" stroke="#f29292" stroke-width="1"/>
<polyline points="934.9,668.1 938.6,686.8 934.9,694.3 949.8,701.8 951.7,711.1" fill="none" stroke="#f29292" stroke-width="1"/>
<polyline points="886.2,686.8 889.9,705.5 908.6,709.3 916.1,709.3 936.7,707.4 951.7,711.1 964.8,714.9 979.8,713 994.8,711.1" fill="none" stroke="#f29292" stroke-width="1"/>
<polyline points="938.6,686.8 961.1,694.3 979.8,696.2 994.8,694.3" fill="none" stroke="#f29292" stroke-width="1"/>
<polyline points="848.7,698 854.3,714.9 867.4,711.1 880.6,713 889.9,705.5" fill="none" stroke="#f29292" stroke-width="1"/>
<polyline points="916.1,709.3 918,729.9 923.6,744.9 919.9,752.3" fill="none" stroke="#f29292" stroke-width="1"/>
<polyline points="964.8,714.9 951.7,733.6 953.6,741.1" fill="none" stroke="#f29292" stroke-width="1"/>
<polyline points="858.1,741.1 886.2,754.2 904.9,748.6 919.9,752.3 949.8,741.1" fill="none" stroke="#f29292" stroke-width="1"/>
<polyline points="854.3,714.9 860,726.1 865.6,739.2 858.1,741.1" fill="none" stroke="#f29292" stroke-width="1"/>
<polyline points="886.2,754.2 888,767.3 903,769.2 904.9,782.3 901.1,787.9" fill="none" stroke="#f29292" stroke-width="1"/>
<polyline points="858.1,758 856.2,771.1 860,782.3" fill="none" stroke="#f29292" stroke-width="1"/>
<polyline points="901.1,787.9 908.6,789.8 934.9,787.9" fill="none" stroke="#f29292" stroke-width="1"/>
<polyline points="841.2,752.3 858.1,758 886.2,754.2" fill="none" stroke="#f29292" stroke-width="1"/>
<polyline points="860,782.3 886.2,784.2 901.1,787.9" fill="none" stroke="#f29292" stroke-width="1"/>
<polyline points="994.8,711.1 987.3,724.3 987.3,737.4 998.5,743" fill="none" stroke="#f29292" stroke-width="1"/>
<polyline points="911.9,639.3 926.4,640.6 939.6,643.3 946.3,639.3 955.5,634" fill="none" stroke="#f29292" stroke-width="1"/>
<polyline points="938.3,643.3 939.6,655.2 948.9,657.8 958.1,660.4 968.7,657.8 975.3,655.2" fill="none" stroke="#f29292" stroke-width="1"/>
<polyline points="830,700 840,712 848.7,698" fill="none" stroke="#f29292" stroke-width="1"/>
<polyline points="840,725 854.3,730 860,726.1" fill="none" stroke="#f29292" stroke-width="1"/>
<polyline points="1061.5,228 1063.6,236.5 1074,245 1080.5,249 1082.7,255.5 1087,264 1092,274.5 1084.8,289 1078.4,300 1074,317 1073.8,320 1072.7,326.6 1068.3,329.9 1059.5,355.2 1055.1,356.3 1054,365.2 1050.7,367.4 1036.3,386.1 1033,390.5 1035.2,394.9 1029.7,392.7 1019.8,403.7 1013.2,413.6 1010.8,420 1000,427.2 988.4,445.4 973.8,463.6 971.4,469.7 964.2,476.9 954.5,486.6 949.6,496.3 937.5,510.8 930.2,525.4 923,537.5 910.8,549.6 901.2,554.5 896.3,564.2 884.2,578.7 872.1,598.1 868,603.9 854,616 839.4,623.3 832.2,635.4 827.3,650 812.8,652.4 803.1,664.5 788.5,679 778.8,688.7 769.2,700.8 761.9,708.1 754.6,717.8 749.8,725.1 744.9,734.8 743.7,744.5 737.7,749.3 735.2,754.2 740.1,759 728,773.6 715.6,789.9 700,794.5 650.6,794.7 646,799" fill="none" stroke="#f3a57a" stroke-width="4.6" stroke-linejoin="round"/>
<polyline points="1061.5,228 1063.6,236.5 1074,245 1080.5,249 1082.7,255.5 1087,264 1092,274.5 1084.8,289 1078.4,300 1074,317 1073.8,320 1072.7,326.6 1068.3,329.9 1059.5,355.2 1055.1,356.3 1054,365.2 1050.7,367.4 1036.3,386.1 1033,390.5 1035.2,394.9 1029.7,392.7 1019.8,403.7 1013.2,413.6 1010.8,420 1000,427.2 988.4,445.4 973.8,463.6 971.4,469.7 964.2,476.9 954.5,486.6 949.6,496.3 937.5,510.8 930.2,525.4 923,537.5 910.8,549.6 901.2,554.5 896.3,564.2 884.2,578.7 872.1,598.1 868,603.9 854,616 839.4,623.3 832.2,635.4 827.3,650 812.8,652.4 803.1,664.5 788.5,679 778.8,688.7 769.2,700.8 761.9,708.1 754.6,717.8 749.8,725.1 744.9,734.8 743.7,744.5 737.7,749.3 735.2,754.2 740.1,759 728,773.6 715.6,789.9 700,794.5 650.6,794.7 646,799" fill="none" stroke="#b86a44" stroke-width="1" stroke-dasharray="2,1.5" stroke-linejoin="round"/>
<polyline points="1092,274.5 1095.4,275.6 1112.3,273.5 1120.7,276.6 1129.2,284 1135.5,285 1144,291.5 1154.6,297.8 1160,306 1164,314.7 1160,321 1161,329.5 1169.4,342 1175.7,350.7 1184.2,357 1194.8,361 1201,371.8 1199,388.7 1192.7,397 1190.2,407.3 1182.7,420 1177.2,424.4 1177.2,428.8 1178.3,433.2 1173.9,437.6 1173.3,444.2 1178.3,453 1182.7,450.8 1189.3,440.9 1195.9,442 1193.7,448.6 1191.5,466.3 1195.9,477.3 1190.4,482.8 1186,488.3 1179.4,494.9 1178.3,486.1 1179.4,468.5 1171.7,464.1 1160.7,456.3 1156.3,459.6 1154.1,472.9 1144.1,481.7 1138.6,488.3 1136.4,497.1 1135.3,508.1 1133.1,512.5 1138.6,515.8 1139.3,525.9 1138,536.4 1140.6,539.1 1149.9,540.4 1151.2,548.3 1147.2,553.6 1151.2,560.2 1149.9,569.5 1143.3,562.9 1141.9,568.1 1145.9,576.1 1155.1,584 1151.2,586.6 1148.5,591.9 1143.3,595.9 1014.5,730.5 995.1,749.9 987.8,752.3 975.7,747.5 956.3,740.2 951.5,742.7 953.9,759.6 951.5,771.7 944.2,783.8 934.5,786.3 936.9,793.5 944.2,798.4 946.6,808.1 913.1,813.3 668.8,873.1" fill="none" stroke="#f0f0f0" stroke-width="4.4" stroke-linejoin="round"/>
<polyline points="1092,274.5 1095.4,275.6 1112.3,273.5 1120.7,276.6 1129.2,284 1135.5,285 1144,291.5 1154.6,297.8 1160,306 1164,314.7 1160,321 1161,329.5 1169.4,342 1175.7,350.7 1184.2,357 1194.8,361 1201,371.8 1199,388.7 1192.7,397 1190.2,407.3 1182.7,420 1177.2,424.4 1177.2,428.8 1178.3,433.2 1173.9,437.6 1173.3,444.2 1178.3,453 1182.7,450.8 1189.3,440.9 1195.9,442 1193.7,448.6 1191.5,466.3 1195.9,477.3 1190.4,482.8 1186,488.3 1179.4,494.9 1178.3,486.1 1179.4,468.5 1171.7,464.1 1160.7,456.3 1156.3,459.6 1154.1,472.9 1144.1,481.7 1138.6,488.3 1136.4,497.1 1135.3,508.1 1133.1,512.5 1138.6,515.8 1139.3,525.9 1138,536.4 1140.6,539.1 1149.9,540.4 1151.2,548.3 1147.2,553.6 1151.2,560.2 1149.9,569.5 1143.3,562.9 1141.9,568.1 1145.9,576.1 1155.1,584 1151.2,586.6 1148.5,591.9 1143.3,595.9 1014.5,730.5 995.1,749.9 987.8,752.3 975.7,747.5 956.3,740.2 951.5,742.7 953.9,759.6 951.5,771.7 944.2,783.8 934.5,786.3 936.9,793.5 944.2,798.4 946.6,808.1 913.1,813.3 668.8,873.1" fill="none" stroke="#747474" stroke-width="2.5" stroke-linejoin="round"/>
<g font-family="Liberation Sans" font-weight="bold" font-size="8.6" fill="#1a1a1a" text-anchor="middle" stroke="#1a1a1a" stroke-width="0.25">
<text transform="translate(1062,302.0) scale(0.9,1)">Ilomantsi</text>
<text transform="translate(1074,395.0) scale(0.9,1)">Korpiselkä</text>
<text transform="translate(1148.6,406.6) scale(0.9,1)">Suojärvi</text>
<text transform="translate(1012,416.3) scale(0.9,1)">Värtsilä</text>
<text transform="translate(1046,433.3) scale(0.9,1)">Soanlahti</text>
<text transform="translate(1012,444.2) scale(0.9,1)">Pälkjärvi</text>
<text transform="translate(956.4,446.7) scale(0.9,1)">Kitee</text>
<text transform="translate(1083.1,464.8) scale(0.9,1)">Suistamo</text>
<text transform="translate(1007.3,470.4) scale(0.9,1)">Ruskeala</text>
<text transform="translate(1024.2,495.8) scale(0.9,1)">Harlu</text>
<text transform="translate(958.8,507.8) scale(0.9,1)">Uukuniemi</text>
<text transform="translate(998.8,510.1) scale(0.9,1)">Sortavala</text>
<text transform="translate(1080.5,516.9) scale(0.9,1)">Impilahti</text>
<text transform="translate(924.2,520.4) scale(0.9,1)">Saari</text>
<text transform="translate(967,542.9) scale(0.9,1)">Jaakkima</text>
<text transform="translate(906,546.6) scale(0.9,1)">Parikkala</text>
<text transform="translate(1124.3,550.8) scale(0.9,1)">Salmi</text>
<text transform="translate(951.5,564.2) scale(0.9,1)">Lumivaara</text>
<text transform="translate(895.6,571.5) scale(0.9,1)">Simpele</text>
<text transform="translate(1034.4,578.0) scale(0.9,1)">Valamo</text>
<text transform="translate(936.3,578.3) scale(0.9,1)">Kurkijoki</text>
<text transform="translate(837,580.3) scale(0.9,1)">Ruokolahti</text>
<text transform="translate(879.3,588.0) scale(0.9,1)">Rautjärvi</text>
<text transform="translate(917.5,603.2) scale(0.9,1)">Hiitola</text>
<text transform="translate(888.5,631.3) scale(0.9,1)">Kirvu</text>
<text transform="translate(928.9,633.2) scale(0.9,1)">Kaukola</text>
<text transform="translate(846.2,638.4) scale(0.9,1)">Jääski</text>
<text transform="translate(959.9,643.4) scale(0.9,1)">Käkisalmi</text>
<text transform="translate(782,652.5) scale(0.9,1)">Lappee</text>
<text transform="translate(957.5,654.1) scale(0.9,1)">Käkisalmen mlk</text>
<text transform="translate(814.7,660.2) scale(0.9,1)">Nuijamaa</text>
<text transform="translate(868.6,666.9) scale(0.9,1)">Antrea</text>
<text transform="translate(929.7,666.2) scale(0.9,1)">Räisälä</text>
<text transform="translate(903.5,677.8) scale(0.9,1)">Vuoksenranta</text>
<text transform="translate(968.9,683.9) scale(0.9,1)">Pyhäjärvi</text>
<text transform="translate(766,687.4) scale(0.9,1)">Ylämaa</text>
<text transform="translate(843,689.3) scale(0.9,1)">Viipurin mlk</text>
<text transform="translate(801.9,693.7) scale(0.9,1)">Vahviala</text>
<text transform="translate(900.1,697.7) scale(0.9,1)">Äyräpää</text>
<text transform="translate(835,701.4) scale(0.9,1)">Viipuri</text>
<text transform="translate(867.4,704.0) scale(0.9,1)">Heinjoki</text>
<text transform="translate(925.3,708.1) scale(0.9,1)">Vuoksela</text>
<text transform="translate(965.3,710.0) scale(0.9,1)">Sakkola</text>
<text transform="translate(779.6,716.0) scale(0.9,1)">Säkkijärvi</text>
<text transform="translate(997,728.7) scale(0.9,1)">Metsäpirtti</text>
<text transform="translate(935.2,729.4) scale(0.9,1)">Valkjärvi</text>
<text transform="translate(735.7,730.0) scale(0.9,1)">Virolahti</text>
<text transform="translate(892.6,735.2) scale(0.9,1)">Muolaa</text>
<text transform="translate(973.3,739.1) scale(0.9,1)">Rautu</text>
<text transform="translate(838.2,739.7) scale(0.9,1)">Johannes</text>
<text transform="translate(854,755.0) scale(0.9,1)">Kuolemajärvi</text>
<text transform="translate(826.3,766.1) scale(0.9,1)">Koivisto</text>
<text transform="translate(931.4,767.2) scale(0.9,1)">Kivennapa</text>
<text transform="translate(888.5,775.2) scale(0.9,1)">Kanneljärvi</text>
<text transform="translate(878.5,788.6) scale(0.9,1)">Uusikirkko</text>
<text transform="translate(927.6,798.7) scale(0.9,1)">Terijoki</text>
<text transform="translate(671.9,824.9) scale(0.9,1)">Suursaari</text>
<text transform="translate(749.4,833.2) scale(0.9,1)">Lavansaari</text>
<text transform="translate(798.2,830.6) scale(0.9,1)">Seiskari</text>
<text transform="translate(690.9,861.0) scale(0.9,1)">Tytärsaari</text>
</g>
<g fill="none" stroke="#ff0000" stroke-width="2.1"><ellipse cx="1044" cy="427.7" rx="32.2" ry="16.0"/><ellipse cx="1085.5" cy="462.2" rx="35.6" ry="14.3"/></g>
</svg>
<!-- /map -->
</body></html>
